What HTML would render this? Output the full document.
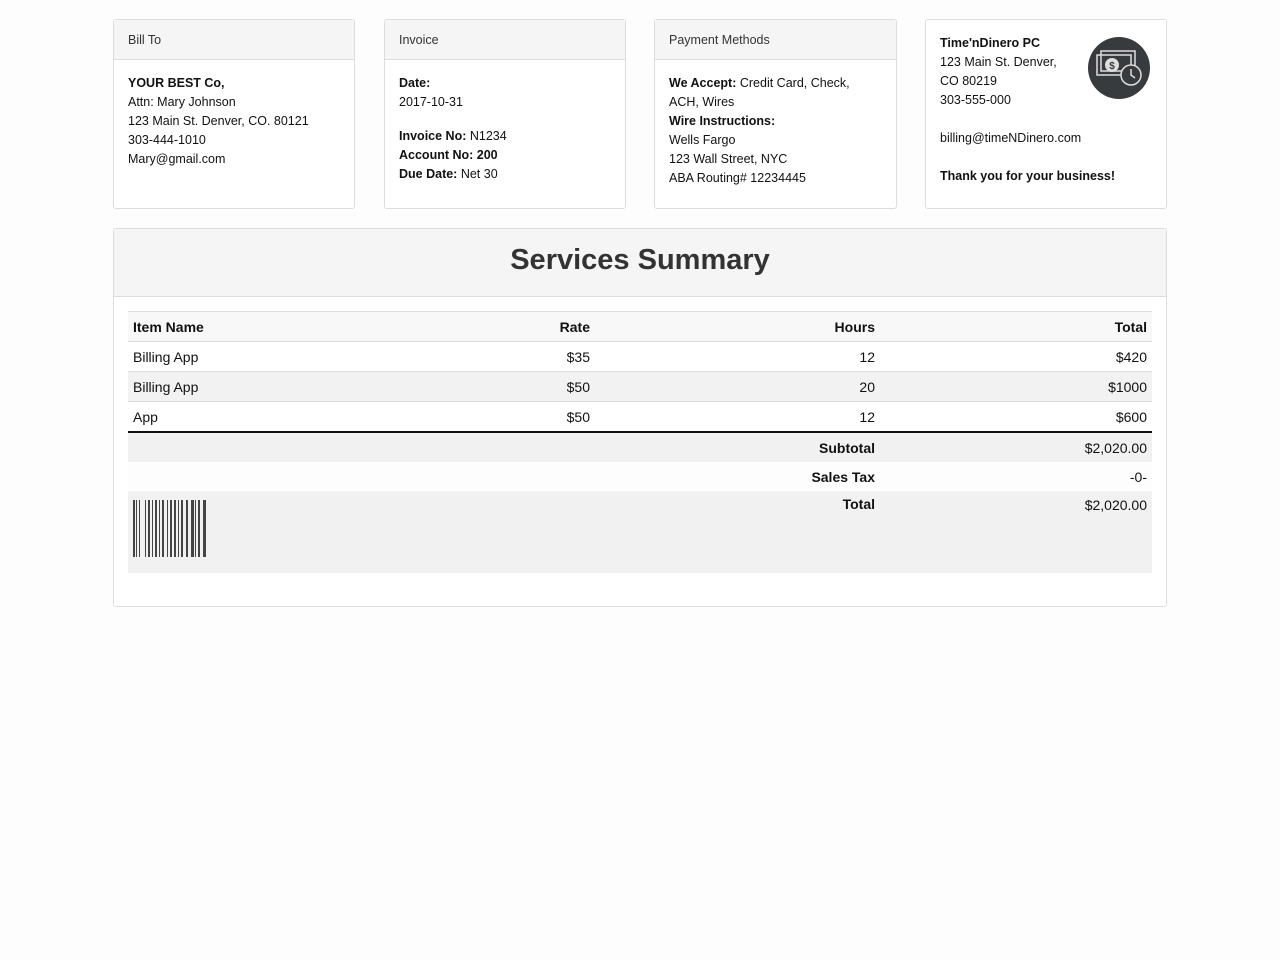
<!DOCTYPE html>
<html><head><style>
body{margin:0;background:#fdfdfd;font-family:"Liberation Sans",sans-serif;color:#111;font-size:12.5px;}
.p{position:absolute;top:19px;width:242px;background:#fff;border:1px solid #ddd;border-radius:3px;box-sizing:border-box;height:190px;}
.ph{height:39px;background:#f5f5f5;border-bottom:1px solid #ddd;padding:0 14px;line-height:40px;color:#333;font-size:12.5px;}
.pb{padding:14px 14px;line-height:19px;}
b{font-weight:bold;}
.s{position:absolute;left:113px;top:228px;width:1054px;height:379px;border:1px solid #ddd;border-radius:3px;background:#fff;box-sizing:border-box;}
.sh{height:67px;background:#f5f5f5;border-bottom:1px solid #ddd;text-align:center;font-size:29px;font-weight:bold;color:#333;line-height:62px;}
table{position:absolute;left:14px;top:82px;width:1024px;border-collapse:collapse;font-size:14px;table-layout:fixed;}
td,th{padding:0 5px;height:29px;border-top:1px solid #ddd;}
th{text-align:left;background:#f8f8f8;height:29px;}
.r{text-align:right;}
</style></head><body>
<div class="p" style="left:113px"><div class="ph">Bill To</div><div class="pb"><b>YOUR BEST Co,</b><br>Attn: Mary Johnson<br>123 Main St. Denver, CO. 80121<br>303-444-1010<br>Mary@gmail.com</div></div>
<div class="p" style="left:384px"><div class="ph">Invoice</div><div class="pb"><b>Date:</b><br>2017-10-31<br><div style="height:15px"></div><b>Invoice No:</b> N1234<br><b>Account No: 200</b><br><b>Due Date:</b> Net 30</div></div>
<div class="p" style="left:654px;width:243px"><div class="ph">Payment Methods</div><div class="pb"><b>We Accept:</b> Credit Card, Check,<br>ACH, Wires<br><b>Wire Instructions:</b><br>Wells Fargo<br>123 Wall Street, NYC<br>ABA Routing# 12234445</div></div>
<div class="p" style="left:925px;width:242px"><div class="pb" style="padding-top:14px"><b>Time'nDinero PC</b><br>123 Main St. Denver,<br>CO 80219<br>303-555-000<br><br>billing@timeNDinero.com<br><br><b>Thank you for your business!</b></div>
<div style="position:absolute;left:146px;top:0;width:94px;height:94px;background:#fff">
<svg width="94" height="94"><circle cx="47" cy="48" r="31" fill="#383b3e"/>
<rect x="25" y="35" width="34" height="20" fill="none" stroke="#ddd" stroke-width="1.5"/><rect x="29" y="31" width="34" height="20" fill="none" stroke="#ddd" stroke-width="1.5"/>
<circle cx="40" cy="45" r="7" fill="#ddd"/><text x="40" y="49" font-size="10" text-anchor="middle" fill="#383b3e" font-weight="bold">$</text>
<circle cx="59" cy="55" r="10" fill="#383b3e" stroke="#ddd" stroke-width="1.5"/><path d="M59 49v6l4 3" stroke="#ddd" fill="none" stroke-width="1.5"/></svg></div></div>
<div class="s"><div class="sh">Services Summary</div>
<table>
<colgroup><col style="width:290px"><col style="width:177px"><col style="width:285px"><col style="width:272px"></colgroup>
<tr><th>Item Name</th><th class="r">Rate</th><th class="r">Hours</th><th class="r">Total</th></tr>
<tr><td>Billing App</td><td class="r">$35</td><td class="r">12</td><td class="r">$420</td></tr>
<tr style="background:#f2f2f2"><td>Billing App</td><td class="r">$50</td><td class="r">20</td><td class="r">$1000</td></tr>
<tr><td>App</td><td class="r">$50</td><td class="r">12</td><td class="r">$600</td></tr>
<tr style="background:#f1f1f1"><td style="border-top:2px solid #111"></td><td style="border-top:2px solid #111"></td><td class="r" style="border-top:2px solid #111"><b>Subtotal</b></td><td class="r" style="border-top:2px solid #111">$2,020.00</td></tr>
<tr style="background:#fdfdfd"><td style="border:0"></td><td style="border:0"></td><td class="r" style="border:0"><b>Sales Tax</b></td><td class="r" style="border:0">-0-</td></tr>
<tr style="background:#f1f1f1"><td style="border:0;height:73px;vertical-align:top;padding-top:9px"><svg width="74" height="57" style="display:block"><g fill="#444"><rect x="0" y="0" width="2" height="57"/><rect x="3" y="0" width="1" height="57"/><rect x="6" y="0" width="1" height="57"/><rect x="12" y="0" width="1" height="57"/><rect x="15" y="0" width="2" height="57"/><rect x="19" y="0" width="1" height="57"/><rect x="22" y="0" width="2" height="57"/><rect x="26" y="0" width="1" height="57"/><rect x="29" y="0" width="2" height="57"/><rect x="34" y="0" width="1" height="57"/><rect x="37" y="0" width="2" height="57"/><rect x="41" y="0" width="2" height="57"/><rect x="45" y="0" width="1" height="57"/><rect x="48" y="0" width="2" height="57"/><rect x="53" y="0" width="2" height="57"/><rect x="58" y="0" width="3" height="57"/><rect x="62" y="0" width="1" height="57"/><rect x="65" y="0" width="2" height="57"/><rect x="70" y="0" width="3" height="57"/></g></svg></td><td style="border:0"></td><td class="r" style="border:0;vertical-align:top;padding-top:5px"><b>Total</b></td><td class="r" style="border:0;vertical-align:top;padding-top:6px">$2,020.00</td></tr>
</table></div>
</body></html>
